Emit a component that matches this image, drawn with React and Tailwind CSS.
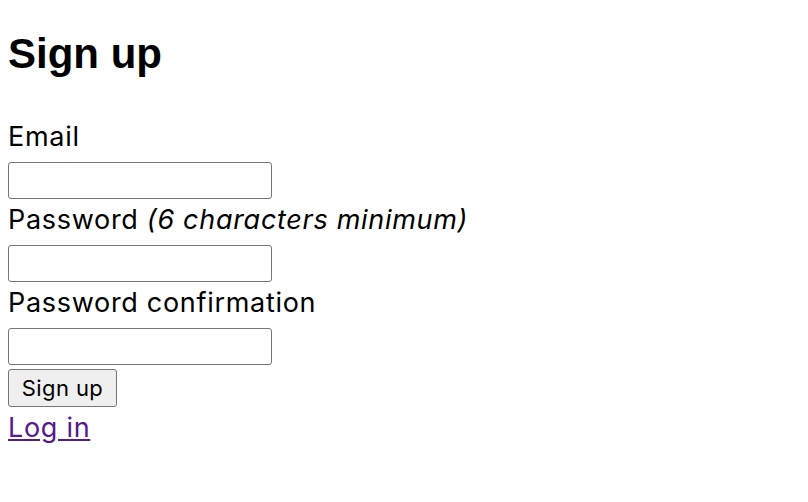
import React from "react";

const Field = ({ label, hint, type }) => (
    <div className="flex flex-col items-start">
        <label className="block pt-[5px] pb-[9px] leading-[32px]">
            {label}
            {hint && <em className="italic"> {hint}</em>}
        </label>
        <input
            type={type}
            className="w-[264px] h-[37px] border border-[#767676] rounded-[3px] bg-white"
        />
    </div>
);

const App = () => {
    return (
        <div
            className="min-h-screen bg-white text-black px-2"
            style={{ fontFamily: 'Inter, "Liberation Sans", sans-serif' }}
        >
            <h1
                className="pt-[30px] text-[42px] leading-[48px] font-bold"
                style={{ fontFamily: '"Liberation Sans", Arial, sans-serif' }}
            >
                Sign up
            </h1>

            <form className="mt-[38px] text-[27px] tracking-[0.7px] flex flex-col items-start">
                <Field label="Email" type="email" />
                <Field label="Password" hint="(6 characters minimum)" type="password" />
                <Field label="Password confirmation" type="password" />

                <button
                    type="button"
                    className="mt-[4px] w-[109px] h-[38px] text-[22px] tracking-[0.4px] bg-[#efefef] border border-[#767676] rounded-[3px]"
                >
                    Sign up
                </button>
            </form>

            <a href="#" className="block mt-[5px] text-[27px] tracking-[0.7px] leading-[32px] text-[#551a8b] underline">
                Log in
            </a>
        </div>
    );
};

export default App;
